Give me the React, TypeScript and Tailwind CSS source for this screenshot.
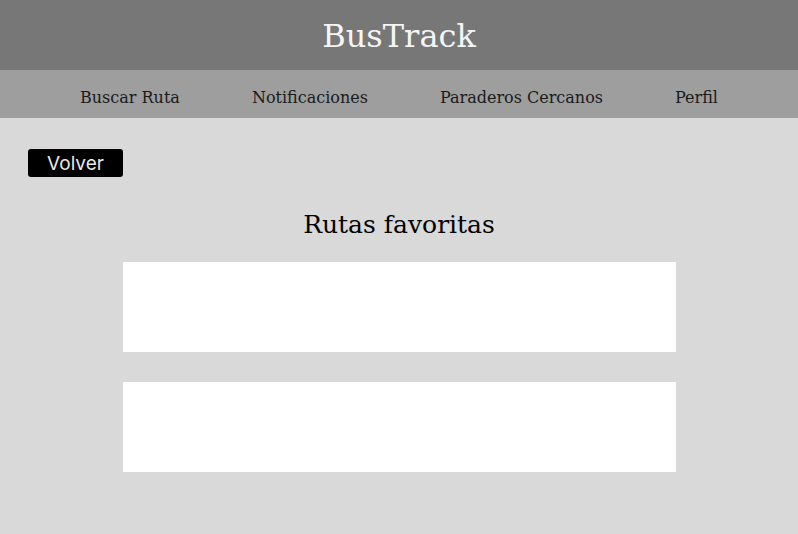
import React from 'react';

const serif = { fontFamily: '"DejaVu Serif", "Liberation Serif", serif' };

const enlaces = ['Buscar Ruta', 'Notificaciones', 'Paraderos Cercanos', 'Perfil'];

export default function App() {
  const favoritas = [1, 2];

  return (
    <div className="min-h-[534px] w-full bg-[#d9d9d9]" style={serif}>
      <header className="h-[70px] bg-[#777777] flex items-center justify-center">
        <h1 className="text-[32px] text-[#f5f5f5] leading-none pt-[1px]">BusTrack</h1>
      </header>

      <nav className="h-[48px] bg-[#9e9e9e] flex items-center justify-center gap-[72px]">
        {enlaces.map(e => (
          <a key={e} className="text-[16px] text-[#1a1a1a] leading-none pt-[8px] cursor-pointer">
            {e}
          </a>
        ))}
      </nav>

      <main className="pt-[31px]">
        <div className="pl-[28px]">
          <button
            className="w-[95px] h-[28px] bg-black rounded-[3px] text-[19px] text-[#e8e8e8] leading-none"
            style={{ fontFamily: 'Inter, "Liberation Sans", sans-serif' }}
          >
            Volver
          </button>
        </div>

        <h2 className="mt-[35px] text-center text-[25px] text-black leading-none">Rutas favoritas</h2>

        <div className="mt-[25px] flex flex-col items-center gap-[30px]">
          {favoritas.map(f => (
            <div key={f} className="w-[553px] h-[90px] bg-white" />
          ))}
        </div>
      </main>
    </div>
  );
}
